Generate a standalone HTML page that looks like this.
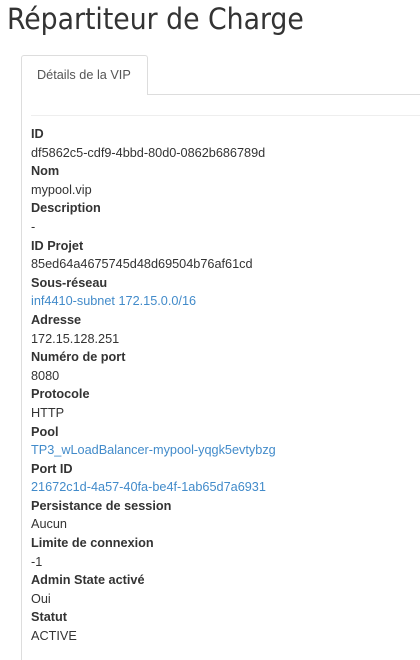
<!DOCTYPE html>
<html><head><meta charset="utf-8"><style>
body{margin:0;width:420px;height:660px;overflow:hidden;background:#fff;font-family:"Liberation Sans",sans-serif;font-size:12.7px;color:#333}
h1{position:absolute;left:7px;top:2px;margin:0;font-weight:normal;font-size:29.7px;color:#333;font-family:"DejaVu Sans Condensed","Liberation Sans",sans-serif;letter-spacing:0px}
.tab{position:absolute;left:21px;top:55px;width:127px;height:40px;border:1px solid #ddd;border-bottom:none;border-radius:3px 3px 0 0;background:#fff;box-sizing:border-box}
.tab span{position:absolute;left:15px;top:12px;color:#555}
.line{position:absolute;left:148px;top:94px;right:0;border-top:1px solid #ddd}
.lb{position:absolute;left:21px;top:95px;bottom:0;border-left:1px solid #ddd}
.hr{position:absolute;left:31px;top:115px;right:0;border-top:1px solid #eee}
dl{position:absolute;left:31px;top:125px;margin:0;line-height:18.6px}
dt{font-weight:bold}dd{margin:0}
a{color:#428bca;text-decoration:none}
</style></head><body>
<h1>Répartiteur de Charge</h1>
<div class="tab"><span>Détails de la VIP</span></div>
<div class="line"></div><div class="lb"></div><div class="hr"></div>
<dl>
<dt>ID</dt><dd>df5862c5-cdf9-4bbd-80d0-0862b686789d</dd>
<dt>Nom</dt><dd>mypool.vip</dd>
<dt>Description</dt><dd>-</dd>
<dt>ID Projet</dt><dd>85ed64a4675745d48d69504b76af61cd</dd>
<dt>Sous-réseau</dt><dd><a>inf4410-subnet 172.15.0.0/16</a></dd>
<dt>Adresse</dt><dd>172.15.128.251</dd>
<dt>Numéro de port</dt><dd>8080</dd>
<dt>Protocole</dt><dd>HTTP</dd>
<dt>Pool</dt><dd><a>TP3_wLoadBalancer-mypool-yqgk5evtybzg</a></dd>
<dt>Port ID</dt><dd><a>21672c1d-4a57-40fa-be4f-1ab65d7a6931</a></dd>
<dt>Persistance de session</dt><dd>Aucun</dd>
<dt>Limite de connexion</dt><dd>-1</dd>
<dt>Admin State activé</dt><dd>Oui</dd>
<dt>Statut</dt><dd>ACTIVE</dd>
</dl>
</body></html>
